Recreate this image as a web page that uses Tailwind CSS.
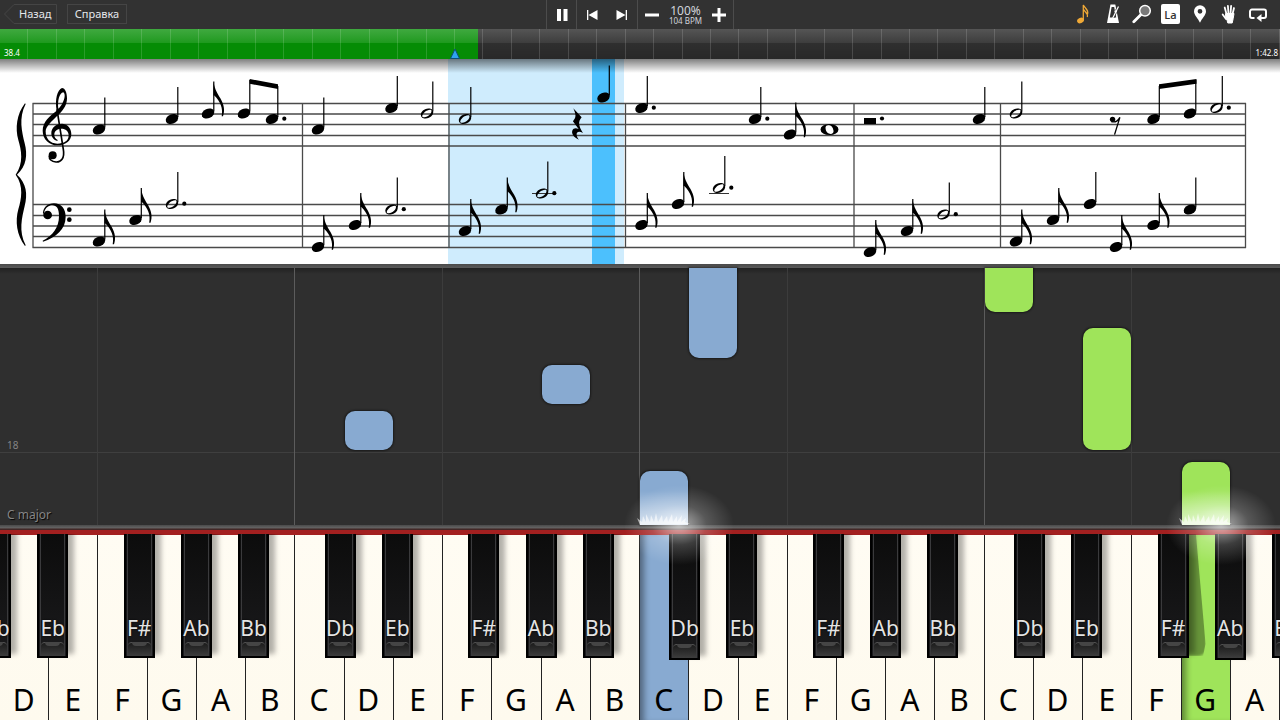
<!DOCTYPE html>
<html lang="ru">
<head>
    <meta charset="UTF-8">
    <meta name="viewport" content="width=device-width, initial-scale=1.0">
    <script src="https://cdn.jsdelivr.net/npm/@tailwindcss/browser@4"></script>
    <title>Piano</title>
</head>
<body class="h-screen flex flex-col overflow-hidden bg-[#2f2f2f] font-['Noto_Sans',sans-serif] text-white">

    <!-- toolbar -->
    <header class="h-[29px] shrink-0 grid grid-cols-[1fr_auto_1fr] bg-[#323232]">
        <nav class="flex items-center gap-2.5 pl-1 pb-px">
            <button type="button" class="relative h-5 w-[53px] pl-[15px] text-left text-[11px] leading-5 text-gray-200">
                <svg class="absolute inset-0 size-full" viewBox="0 0 53 20" fill="none" stroke="#454545"><path d="M10 .5H52.500V19.500H10L.5 10Z"/></svg>
                Назад
            </button>
            <button type="button" class="h-5 w-[60px] border border-[#454545] text-center text-[11px] leading-[18px] text-gray-200">Справка</button>
        </nav>
        <div class="flex border-x border-[#4c4c4c]">
            <button type="button" aria-label="Pause" class="w-[30px] border-r border-[#4c4c4c] flex items-center justify-center">
                <svg class="size-4" viewBox="0 0 16 16" fill="#fff"><path d="M3 2h4v12H3zM9.500 2h4v12h-4z"/></svg>
            </button>
            <div class="flex border-r border-[#4c4c4c]">
                <button type="button" aria-label="Previous" class="w-[30px] flex items-center justify-center">
                    <svg class="size-4" viewBox="0 0 16 16" fill="#fff"><path d="M3 3h1.300v10H3zM13.500 3v10L4.500 8z"/></svg>
                </button>
                <button type="button" aria-label="Next" class="w-[30px] flex items-center justify-center">
                    <svg class="size-4" viewBox="0 0 16 16" fill="#fff"><path d="M11.700 3H13v10h-1.300zM2.500 3v10l9-5z"/></svg>
                </button>
            </div>
            <div class="flex w-[95px] items-center justify-between px-[7px]">
                <button type="button" aria-label="Slower" class="w-3.5"><svg class="h-3.5 w-3.5" viewBox="0 0 14 14"><path d="M0 5.500h14v3H0z" fill="#fff"/></svg></button>
                <div class="text-center text-gray-300">
                    <div class="text-[12px] leading-3">100%</div>
                    <div class="text-[8px] leading-2">104 BPM</div>
                </div>
                <button type="button" aria-label="Faster" class="w-3.5"><svg class="h-3.5 w-3.5" viewBox="0 0 14 14"><path d="M0 5.500h5.500V0h3v5.500H14v3H8.500V14h-3V8.500H0z" fill="#fff"/></svg></button>
            </div>
        </div>
        <div class="flex items-center justify-end pr-2 pb-px">
            <button type="button" aria-label="Notes" class="w-[29px] flex justify-center">
                <svg class="size-5" viewBox="0 0 20 20"><ellipse cx="6.500" cy="16.500" rx="3.500" ry="2.700" transform="rotate(-20 6.500 16.500)" fill="#efa836"/><path d="M9.300 16.500V1c1 3 5.500 4 4.300 9M9.600 5.500c1 2.500 4.700 3 3.700 7.500" fill="none" stroke="#efa836" stroke-width="1.300"/></svg>
            </button>
            <button type="button" aria-label="Metronome" class="w-[29px] flex justify-center">
                <svg class="size-5" viewBox="0 0 20 20"><path d="M7.500.5h4.800L16 19H4z" fill="#fff"/><path d="M8.600 3h2.600l2 10.500H6.800z" fill="#323232"/><path d="M10 13.500l5.500-11" stroke="#323232" stroke-width="2.600"/><path d="M9.500 14.500l6-12" stroke="#fff" stroke-width="1.200"/><circle cx="12.700" cy="7.500" r="1.200" fill="#fff"/></svg>
            </button>
            <button type="button" aria-label="Zoom" class="w-[29px] flex justify-center">
                <svg class="size-5" viewBox="0 0 20 20"><path d="M1.800 17.800l7.500-7.500" stroke="#fff" stroke-width="2.800" stroke-linecap="round"/><circle cx="13" cy="6.800" r="5.300" fill="#7a7a7a" stroke="#fff" stroke-width="1.500"/></svg>
            </button>
            <button type="button" aria-label="Note names" class="w-[29px] flex justify-center">
                <span class="h-5 w-[19px] rounded-[2px] bg-white text-center font-['Open_Sans','Noto_Sans',sans-serif] text-[11px] leading-[21px] font-semibold text-[#333]">La</span>
            </button>
            <button type="button" aria-label="Marker" class="w-[29px] flex justify-center">
                <svg class="size-5" viewBox="0 0 20 20"><path d="M10 1.300a6 6 0 0 1 6 6c0 4-4 7-6 11.500C8 14.300 4 11.300 4 7.300a6 6 0 0 1 6-6Zm0 3.600a2.400 2.400 0 1 0 0 4.800 2.400 2.400 0 0 0 0-4.800Z" fill="#fff" fill-rule="evenodd"/></svg>
            </button>
            <button type="button" aria-label="Hands" class="w-[29px] flex justify-center">
                <svg class="size-5" viewBox="0 0 20 20" fill="none" stroke="#fff" stroke-width="1.800" stroke-linecap="round"><path d="M7.500 10L5.700 3.500M9.500 10L8.900 1.800M11.500 10l.6-8M13.300 11l1.700-7M7 15L3.700 10.500"/><path d="M7 9.500h7l1 0-.8 5-1 4.500H8.800L8 16 6.500 13.500z" fill="#fff" stroke-width="1"/></svg>
            </button>
            <button type="button" aria-label="Loop" class="w-[29px] flex justify-center">
                <svg class="size-5" viewBox="0 0 20 20"><path d="M6.500 14H4a2 2 0 0 1-2-2V7.500a2 2 0 0 1 2-2h12a2 2 0 0 1 2 2V12a2 2 0 0 1-2 2h-3" fill="none" stroke="#fff" stroke-width="2"/><path d="M8.500 14l5-4v8z" fill="#fff"/></svg>
            </button>
        </div>
    </header>

    <!-- song progress -->
    <div class="relative h-[30px] shrink-0 bg-linear-to-b from-[#555] via-[#3e3e3e] via-45% to-[#2c2c2c] overflow-hidden">
        <div class="absolute inset-x-0 bottom-0 h-4 bg-[#262626]/60"></div>
        <div class="absolute inset-y-0 left-0 bg-linear-to-b from-[#3fa93f] to-[#1f9a1f] to-45%" style="width:37.34%">
            <div class="absolute inset-x-0 bottom-0 h-4 bg-[#058c05]"></div>
        </div>
        <div id="ticks" class="absolute inset-0 flex"></div>
        <div class="absolute inset-x-0 bottom-0 flex justify-between pl-1 pr-0.5 text-[8px] leading-3">
            <span>38.4</span><span>1:42.8</span>
        </div>
        <svg class="absolute bottom-0 h-[11px] w-2.5 -translate-x-1/2" style="left:35.55%" viewBox="0 0 10 11"><path d="M5 1l4.500 9.500H.5z" fill="#2ea3ee" stroke="#0b4d78"/></svg>
    </div>

    <!-- sheet music -->
    <div class="relative shrink-0 bg-white">
        <svg id="score" class="block w-full" viewBox="0 59 1280 205">
            <defs>
                <ellipse id="q" rx="6.500" ry="4.700" transform="rotate(-24)"/>
                <path id="h" fill-rule="evenodd" transform="rotate(-24)" d="M-6.500 0a6.500 4.700 0 1 0 13 0a6.500 4.700 0 1 0-13 0ZM-5.600 1C-4.500-2.500 3-4 5.400-1.500C5 2.500-3 4.500-5.600 1Z"/>
                <path id="w" fill-rule="evenodd" d="M-9 0a9 5.500 0 1 0 18 0a9 5.500 0 1 0-18 0ZM-4-2C-3-6 3-5 4 1C5 6-4 6-4-2Z"/>
                <path id="flag" d="M5.500-31.500C7.200-23 9.500-20 12.500-15C16.200-8.500 17-3 15 2.700H13.700C15.200-5 12.500-12 6.300-18H5.500Z"/>
            </defs>
            <rect x="448" y="59" width="176" height="205" fill="#cfecfd"/>
            <rect x="592" y="59" width="23" height="205" fill="#4cc0fd"/>
            <g id="staff" stroke="#4a4a4a" stroke-width="1.300"></g>
            <g transform="translate(0 60) scale(.3333)">
                <path d="M75 130C50 162 45 205 55 240C64 270 72 310 47 344C72 378 64 418 55 448C45 483 50 526 75 558L77 556C55 513 66 473 74 438C83 403 80 370 51 344C80 318 83 285 74 250C66 215 55 175 77 132Z"/>
                <path fill-rule="evenodd" d="M186 84C172 90 164 118 170 152C150 168 128 185 128 212C128 238 148 256 172 256C196 256 214 243 214 222C214 202 200 191 186 191C168 191 154 203 154 220C154 232 162 241 172 243L173 240C166 236 163 231 163 224C163 213 171 206 184 206C197 206 206 214 206 226C206 243 192 251 172 251C150 251 137 236 137 214C137 200 152 186 178 162C194 146 201 132 201 115C201 98 195 84 186 84ZM190 97C197 101 194 118 188 128C184 136 179 142 175 146C172 124 178 98 190 97Z"/>
                <path d="M171 148L190 268C195 296 182 307 168 306C154 305 147 297 148 288" fill="none" stroke="#000" stroke-width="5"/>
                <circle cx="158" cy="286" r="12"/>
                <circle cx="143" cy="465" r="13"/>
                <path d="M129 465C127 443 143 430 162 430C184 430 197 447 197 470C197 508 168 532 129 545L128 542C158 527 177 503 177 468C177 446 170 436 157 436C146 436 137 443 133 455Z"/>
                <circle cx="208" cy="449" r="7"/><circle cx="208" cy="479" r="7"/>
                <path transform="translate(900 0)" d="M820 145L845 172C834 186 835 196 849 219C838 213 830 215 830 223C830 230 834 236 837 239C822 232 814 221 817 212C820 204 828 203 836 207L819 184C829 172 829 165 820 145Z"/>
                <g transform="translate(2820 0)">
                    <circle cx="518" cy="178" r="8"/>
                    <path d="M514 185C526 188 535 182 540 172L524 224" fill="none" stroke="#000" stroke-width="4"/>
                </g>
            </g>
            <rect x="864" y="118" width="12" height="6"/>
            <circle cx="882" cy="118.500" r="2.100"/>
            <path d="M249.700 79L278 84.300V89L249.700 83.700ZM1159 84.300L1196.500 79V83.700L1159 89Z"/>
            <path d="M532 193.500h21M709 193.500h20" stroke="#333"/>
            <g id="notes"></g>
        </svg>
        <div class="absolute inset-x-0 top-0 h-3.5 bg-linear-to-b from-black/50 to-transparent"></div>
    </div>

    <div class="h-1 shrink-0 bg-linear-to-b from-[#4a4a4a] to-[#5a5a5a]"></div>

    <!-- falling notes -->
    <main id="roll" class="relative grow bg-[#2f2f2f]">
        <div class="absolute inset-x-0 top-0 h-1.5 bg-linear-to-b from-black/30 to-transparent"></div>
        <div class="absolute inset-x-0 bottom-[72px] h-px bg-[#3f3f3f]"></div>
        <div class="absolute left-[7px] bottom-[74px] text-[10px] leading-3 text-[#858585]">18</div>
        <div class="absolute left-[7px] bottom-0.5 text-[12px] leading-4 text-[#858585] [text-shadow:1px_1px_1px_#000]">C major</div>
    </main>

    <!-- keyboard -->
    <div class="h-[5px] shrink-0 bg-linear-to-b from-[#4a4a4a] via-[#606060] to-[#3a1a1a]"></div>
    <div class="relative h-[190px] shrink-0 border-t-[5px] border-[#a32020] bg-[#fefaee]">
        <div id="white" class="flex h-full"></div>
        <div id="black" class="absolute inset-0 -top-px overflow-hidden"></div>
    </div>

    <script>
        const byId = (id) => document.getElementById(id);
        const add = (id, html) => byId(id).insertAdjacentHTML("beforeend", html);

        // progress ticks
        for (let i = 0; i < 45; i++) add("ticks", '<div class="grow border-r border-white/15"></div>');

        // staff and bar lines
        let lines = "";
        for (let y of [103.5, 114, 124.5, 135.5, 146, 204.5, 215.5, 226, 236.5, 247.5]) lines += `M32.500 ${y}H1246`;
        for (let x of [33, 302.5, 449, 625.5, 854, 1000.5, 1245.5]) lines += `M${x} 103V248`;
        add("staff", `<path d="${lines}"/>`);

        // [x, y, type, dotted]; e = eighth, b = beamed
        const notes = [
            [99, 129.5, "q"], [172, 119, "q"], [208, 113.5, "e"], [244, 113.5, "b", 0, 80], [272, 119, "b", 1, 86],
            [318, 129.5, "q"], [391.5, 108, "q"], [427, 113.5, "h"],
            [465, 119, "h"], [603.5, 97.5, "q"],
            [641.5, 108, "q", 1], [755, 119, "q", 1], [790, 134.5, "e"], [829.5, 129.5, "w"],
            [979, 119, "q"], [1016, 113.5, "h"], [1153.5, 119, "b", 0, 86], [1190, 113.5, "b", 0, 80], [1216.5, 108, "h", 1],
            [99, 241.5, "e"], [135.5, 220, "e"], [172, 204, "h", 1],
            [318, 247, "e"], [355, 225, "e"], [391.5, 209.5, "h", 1],
            [465, 231, "e"], [501.5, 209.5, "e"], [542, 193.5, "h", 1],
            [641.5, 225, "e"], [678, 204, "e"], [719, 188, "h", 1],
            [870, 252, "e"], [907, 231, "e"], [943.5, 214.5, "h", 1],
            [1016, 241.5, "e"], [1053, 220, "e"], [1090, 204, "q"],
            [1116, 247, "e"], [1153.5, 225, "e"], [1190, 209.5, "q"]
        ];
        for (let [x, y, type, dot, top] of notes) {
            let head = type == "h" || type == "w" ? type : "q";
            let out = `<use href="#${head}"/>`;
            if (type != "w") out += `<path d="M5.800 -2V${top ? top - y : -32}" stroke="#000" stroke-width="1.200"/>`;
            if (type == "e") out += '<use href="#flag"/>';
            if (dot) out += '<circle cx="12.300" cy="-.3" r="2.100"/>';
            add("notes", `<g transform="translate(${x} ${y})">${out}</g>`);
        }

        const KEYS = 26;
        const pos = (i) => (i / KEYS * 100).toFixed(3) + "%";

        // octave guides
        for (let i of [2, 9, 16, 23]) add("roll", `<div class="absolute inset-y-0 w-px -ml-px bg-[#3c3c3c]" style="left:${pos(i)}"></div>`);
        for (let i of [6, 13, 20]) add("roll", `<div class="absolute inset-y-0 w-px -ml-px bg-[#5c5c5c]" style="left:${pos(i)}"></div>`);

        const skin = {
            blue: "bg-[#88aad1]",
            green: "bg-[#9fe45a]"
        };
        // [key, bottom, height, colour, corners]
        const bars = [
            [7, 75, 39, "blue", "rounded-[10px]"],
            [11, 121, 39, "blue", "rounded-[10px]"],
            [13, 0, 54, "blue", "rounded-t-[10px]"],
            [14, 167, 90, "blue", "rounded-b-[10px]"],
            [20, 213, 44, "green", "rounded-b-[10px]"],
            [22, 75, 122, "green", "rounded-[10px]"],
            [24, 0, 63, "green", "rounded-t-[10px]"]
        ];
        for (let [key, bottom, height, color, corners] of bars) {
            add("roll", `<div class="absolute w-12 shadow-[0_0_2px_1px_rgba(0,0,0,0.45)] ${skin[color]} ${corners}" style="left:${pos(key)};bottom:${bottom}px;height:${height}px"></div>`);
        }

        // sparks where a note touches the keys
        for (let key of [13, 24]) {
            add("roll", `<div class="absolute z-10 -bottom-10 h-20 w-[110px] -ml-4 pointer-events-none bg-radial-[closest-side] from-white/65 via-white/20 via-50% to-transparent" style="left:${pos(key)}"></div>
                <div class="absolute bottom-0 h-[34px] w-12 bg-linear-to-t from-white/60 to-transparent" style="left:${pos(key)}"></div>
                <svg class="absolute z-10 bottom-0 h-4 w-[54px] -ml-[3px]" style="left:${pos(key)}" viewBox="0 0 54 16"><path d="M3 16L0 9l5 4 1-6 3 6 0-8 4 8 1-7 3 7 2-9 2 9 4-7 1 7 4-6 1 6 4-8 1 8 4-6 0 6 5-7-1 7 5-4-1 4 5 2z" fill="#fff" fill-opacity=".6"/></svg>`);
        }

        // white keys start from D
        const names = "DEFGABC";
        for (let i = 0; i < KEYS; i++) {
            let name = names[i % 7];
            let look = "bg-linear-to-b from-[#fffcf3] to-[#fefaee] border-[#222]";
            if (i == 13) look = "bg-[#88aad1] border-[#222] shadow-[inset_8px_0_6px_-4px_rgba(0,0,0,0.4)]";
            if (i == 24) look = "bg-[#9fe45a] border-[#222] shadow-[inset_8px_0_6px_-4px_rgba(0,0,0,0.4)]";
            add("white", `<button type="button" class="flex-1 basis-0 flex items-end justify-center border-r pr-px text-[30px] leading-10 text-black ${look}">${name}</button>`);
        }

        // black keys: offset from the left edge of the white key they precede
        const flats = { D: ["Db", -20], E: ["Eb", -12], G: ["F#", -24], A: ["Ab", -16], B: ["Bb", -8] };
        for (let i = 0; i <= KEYS; i++) {
            let flat = flats[names[i % 7]];
            if (!flat) continue;
            let shade = i == 24 ? '<div class="absolute top-0 left-6 h-[122px] w-6 rounded-br-lg bg-black/35 blur-[1px] [clip-path:polygon(0_0,60%_0,100%_90%,90%_100%,0_100%)]"></div>' : "";
            let press = i == 14 || i == 25 ? "h-[126px]" : "h-[124px]";
            add("black", `<div class="absolute top-0 w-[31px]" style="left:calc(${pos(i)} + ${flat[1]}px)">
                ${shade}
                <button type="button" class="relative block w-full border-x-2 border-b-2 border-black bg-linear-to-b from-[#0c0c0c] to-[#1b1b1d] shadow-[6px_-4px_5px_rgba(0,0,0,0.3)] ${press}">
                    <span class="absolute inset-y-0 left-px right-px border-x border-[#3a3a3c]"></span>
                    <span class="absolute inset-x-0.5 bottom-0 h-3.5 rounded-t-sm border-t border-[#555] bg-linear-to-b from-[#1c1c1c] to-[#3c3c3c]"></span>
                    <span class="absolute inset-x-1.5 bottom-2.5 h-1 rounded-b-full bg-[#454545]"></span>
                    <span class="absolute -inset-x-2 top-20 text-center text-[21px] leading-7 text-[#e4e4e4] [text-shadow:0_0_2px_#000]">${flat[0]}</span>
                </button>
            </div>`);
        }
    </script>
</body>
</html>
